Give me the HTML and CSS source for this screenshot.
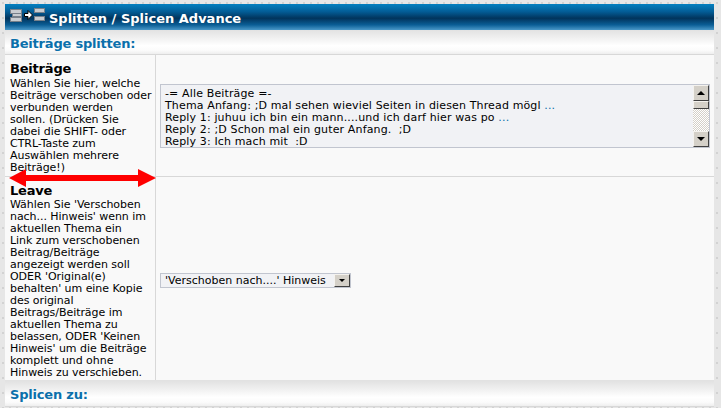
FILE: index.html
```html
<!DOCTYPE html>
<html lang="de">
<head>
<meta charset="utf-8">
<title>Splitten / Splicen Advance</title>
<link rel="stylesheet" href="styles.css">
</head>
<body>
<div class="page">
  <header class="title-bar">
    <svg class="title-icon" width="36" height="16" viewBox="0 0 36 16">
      <g fill="#c8ccd0" stroke="#77808a" stroke-width="1">
        <rect x="0.500" y="2.500" width="11" height="4"/>
        <rect x="2.500" y="6.500" width="9" height="3"/>
        <rect x="0.500" y="10.500" width="11" height="4"/>
        <rect x="24.500" y="1.500" width="10" height="4"/>
        <rect x="24.500" y="9.500" width="10" height="4"/>
      </g>
      <path d="M14.500 6.500h3.500V3.500l4.500 4.500-4.500 4.500v-3H14.500z" fill="#fff" stroke="#000" stroke-width="1"/>
    </svg>
    <h1 class="title-text">Splitten / Splicen Advance</h1>
  </header>
  <h2 class="section-head">Beiträge splitten:</h2>
  <section class="form-row row-posts">
    <div class="label-cell">
      <h3 class="label-title">Beiträge</h3>
      <p class="label-text">Wählen Sie hier, welche<br>Beiträge verschoben oder<br>verbunden werden<br>sollen. (Drücken Sie<br>dabei die SHIFT- oder<br>CTRL-Taste zum<br>Auswählen mehrere<br>Beiträge!)</p>
    </div>
    <div class="field-cell">
      <div class="listbox">
        <ul class="list-items">
          <li>-= Alle Beiträge =-</li>
          <li>Thema Anfang: ;D mal sehen wieviel Seiten in diesen Thread mögl <span class="more">...</span></li>
          <li>Reply 1: juhuu ich bin ein mann....und ich darf hier was po <span class="more">...</span></li>
          <li>Reply 2: ;D Schon mal ein guter Anfang.&nbsp; ;D</li>
          <li>Reply 3: Ich mach mit&nbsp; :D</li>
        </ul>
        <div class="scrollbar">
          <span class="sb-btn"><span class="tri tri-up"></span></span>
          <span class="sb-thumb"></span>
          <span class="sb-track"></span>
          <span class="sb-btn"><span class="tri tri-down"></span></span>
        </div>
      </div>
    </div>
  </section>
  <section class="form-row row-leave">
    <div class="label-cell">
      <h3 class="label-title">Leave</h3>
      <p class="label-text">Wählen Sie 'Verschoben<br>nach... Hinweis' wenn im<br>aktuellen Thema ein<br>Link zum verschobenen<br>Beitrag/Beiträge<br>angezeigt werden soll<br>ODER 'Original(e)<br>behalten' um eine Kopie<br>des original<br>Beitrags/Beiträge im<br>aktuellen Thema zu<br>belassen, ODER 'Keinen<br>Hinweis' um die Beiträge<br>komplett und ohne<br>Hinweis zu verschieben.</p>
    </div>
    <div class="field-cell">
      <div class="dropdown">
        <span class="dropdown-value">'Verschoben nach....' Hinweis</span>
        <span class="dropdown-btn"><span class="tri tri-down small"></span></span>
      </div>
    </div>
  </section>
  <h2 class="section-head section-last">Splicen zu:</h2>
  <svg class="red-arrow" width="148" height="20" viewBox="0 0 148 20">
    <path d="M0 10 17 1V7H129V1L147 10 129 19V13H17V19Z" fill="#f00"/>
  </svg>
</div>
</body>
</html>
```
FILE: styles.css
```css
* { box-sizing: border-box; }
html, body { margin: 0; padding: 0; }
body {
  width: 721px;
  height: 408px;
  overflow: hidden;
  background-color: #e6e6e6;
  background-image: radial-gradient(circle at 3px 3px, #d2d2d2 0 1px, transparent 1.2px);
  background-size: 7px 15px;
  font-family: "DejaVu Sans", Verdana, sans-serif;
  color: #000;
}
.page {
  position: relative;
  width: 709px;
  margin: 4px 0 0 5px;
  background: #f9f9f9;
}
.title-bar {
  display: flex;
  align-items: center;
  gap: 3px;
  height: 26px;
  padding: 0 0 0 5px;
  background: linear-gradient(#0480c0 0, #035c95 30%, #01345c 55%, #0a5d95 80%, #4a98c8 100%);
}
.title-icon { flex: none; margin-top: -4px; }
.title-text {
  margin: 0;
  padding-top: 4px;
  font-size: 13px;
  line-height: 18px;
  font-weight: bold;
  color: #fff;
}
.section-head {
  margin: 0;
  height: 25px;
  padding: 6px 0 0 5px;
  font-size: 13px;
  line-height: 16px;
  font-weight: bold;
  letter-spacing: -0.2px;
  color: #0b70ab;
  background: linear-gradient(#e2e2e2 0, #f1f1f1 35%, #fff 65%, #fbfbfb 85%, #eee 100%);
  border-bottom: 1px solid #d8d8d8;
}
.section-last { height: 26px; }
.form-row {
  display: grid;
  grid-template-columns: 151px 1fr;
  border-bottom: 1px solid #d8d8d8;
}
.row-posts { height: 122px; }
.row-leave { height: 204px; border-bottom-color: #e2e2e2; }
.label-cell {
  padding: 6px 0 0 5px;
  border-right: 1px solid #d8d8d8;
}
.label-title {
  margin: 0 0 1px;
  font-size: 13px;
  line-height: 15px;
  font-weight: bold;
  letter-spacing: -0.2px;
}
.row-posts .label-title { margin-bottom: 2px; }
.label-text {
  margin: 0;
  font-size: 11px;
  line-height: 12px;
  white-space: nowrap;
  letter-spacing: -0.05px;
}
.field-cell {
  display: flex;
  align-items: center;
  padding: 0 4px;
}
.listbox {
  display: flex;
  width: 550px;
  height: 64px;
  border: 1px solid #c1c5cf;
  background: #f1f2f5;
}
.list-items {
  flex: 1;
  list-style: none;
  margin: 0;
  padding: 3px 0 0 4px;
  font-size: 11px;
  line-height: 12px;
  letter-spacing: 0.14px;
  white-space: nowrap;
}
.more { color: #0b70ab; }
.scrollbar {
  display: flex;
  flex-direction: column;
  flex: none;
  width: 16px;
}
.sb-btn, .sb-thumb, .dropdown-btn {
  display: flex;
  align-items: center;
  justify-content: center;
  background: #d4d0c8;
  border: 1px solid;
  border-color: #f4f2ee #404040 #404040 #f4f2ee;
}
.sb-btn { height: 16px; flex: none; }
.sb-thumb { height: 8px; flex: none; }
.sb-track {
  flex: 1;
  background-color: #fff;
  background-image: repeating-conic-gradient(#d4d0c8 0 25%, #fff 0 50%);
  background-size: 2px 2px;
}
.tri { width: 0; height: 0; border-left: 4px solid transparent; border-right: 4px solid transparent; }
.tri-up { border-bottom: 4px solid #000; }
.tri-down { border-top: 4px solid #000; }
.tri.small { border-left-width: 3px; border-right-width: 3px; border-top-width: 3px; }
.dropdown {
  display: flex;
  align-items: center;
  width: 191px;
  height: 15px;
  border: 1px solid #c1c5cf;
  background: #f1f2f5;
  font-size: 11px;
  line-height: 13px;
  margin-top: 3px;
}
.dropdown-value { flex: 1; padding-left: 4px; white-space: nowrap; }
.dropdown-btn { flex: none; width: 16px; height: 13px; }
.red-arrow {
  position: absolute;
  left: 4px;
  top: 164px;
}
```
